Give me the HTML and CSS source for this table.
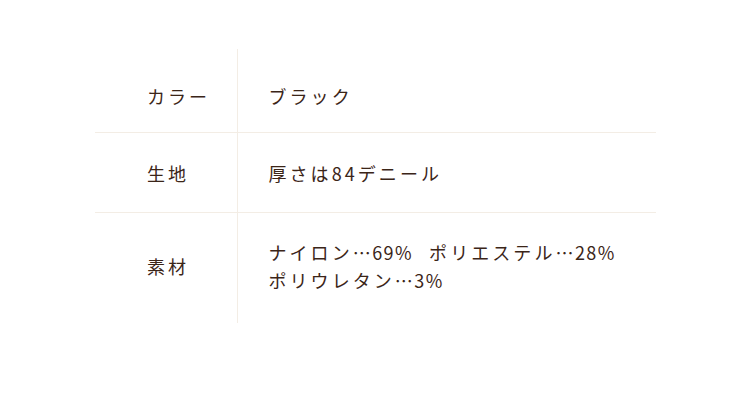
FILE: index.html
```html
<!DOCTYPE html>
<html lang="ja">
<head>
<meta charset="utf-8">
<link rel="stylesheet" href="styles.css">
</head>
<body>
<div class="wrap">
<table class="spec">
<tr class="r1"><th>カラー</th><td>ブラック</td></tr>
<tr class="r2"><th>生地</th><td>厚さは84デニール</td></tr>
<tr class="r3"><th>素材</th><td>ナイロン<span class="pct">…69%</span><span class="gap"></span>ポリエステル<span class="pct">…28%</span><br>ポリウレタン<span class="pct">…3%</span></td></tr>
</table>
</div>
</body>
</html>
```
FILE: styles.css
```css
html, body { margin: 0; padding: 0; background: #fff; }
body { font-family: "Noto Sans CJK JP", "Noto Sans", sans-serif; color: #3b2518; }
.wrap { padding: 49px 0 0 95px; }
.spec { border-collapse: collapse; width: 561px; }
.spec th, .spec td { font-size: 18px; font-weight: 400; line-height: 28px; letter-spacing: 0.17em; text-align: left; vertical-align: middle; padding: 26px 0 26px; }
.spec th { width: 142px; padding-left: 52px; box-sizing: border-box; border-right: 1px solid #f3ede5; }
.spec td { padding-left: 31px; }
.spec tr + tr th, .spec tr + tr td { border-top: 1px solid #f3ede5; }
.pct { letter-spacing: 0.08em; }
.gap { display: inline-block; width: 16px; }
.r1 th, .r1 td { padding-top: 33px; padding-bottom: 22px; }
.r2 th, .r2 td { padding-top: 26px; padding-bottom: 25px; }
.r3 th, .r3 td { padding-top: 25px; padding-bottom: 29px; }
```
